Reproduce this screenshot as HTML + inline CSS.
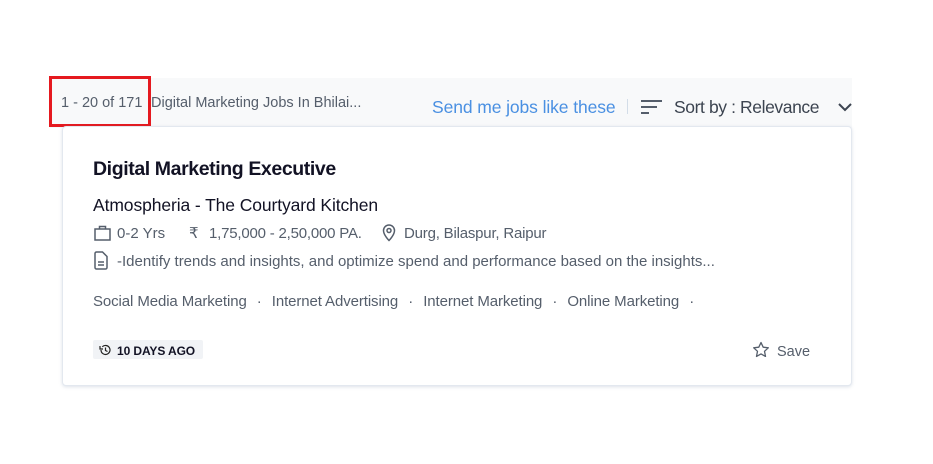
<!DOCTYPE html>
<html><head><style>
*{margin:0;padding:0;box-sizing:border-box}
body{width:933px;height:464px;background:#fff;font-family:"Liberation Sans",sans-serif;position:relative;overflow:hidden}
.bg{position:absolute;left:50px;top:78px;width:802px;height:50px;background:#f8f9fa}
.red{position:absolute;left:49px;top:76px;width:102px;height:51px;border:3px solid #e5191f}
.t{position:absolute;white-space:nowrap}
.card{position:absolute;left:62px;top:126px;width:790px;height:260px;background:#fff;border:1px solid #e3e8ef;border-radius:4px;box-shadow:0 1px 3px rgba(120,140,170,.25)}
</style></head><body>
<div class="bg"></div>
<div class="t" style="left:61px;top:95px;font-size:14.5px;color:#555e6b;letter-spacing:0px">1 - 20 of 171</div>
<div class="t" style="left:151px;top:95px;font-size:14.5px;color:#555e6b;letter-spacing:0px">Digital Marketing Jobs In Bhilai...</div>
<div class="red"></div>
<div class="t" style="left:432px;top:97px;font-size:17.5px;color:#4a90e2;letter-spacing:-0.1px">Send me jobs like these</div>
<div style="position:absolute;left:627px;top:99px;width:1px;height:15px;background:#d3dde8"></div>
<svg style="position:absolute;left:641px;top:99px" width="22" height="16"><g stroke="#555e6b" stroke-width="2"><line x1="0" y1="2" x2="21" y2="2"/><line x1="0" y1="8" x2="16" y2="8"/><line x1="0" y1="14" x2="8" y2="14"/></g></svg>
<div class="t" style="left:674px;top:97px;font-size:17.5px;color:#3c4450;letter-spacing:-0.4px">Sort by : Relevance</div>
<svg style="position:absolute;left:838px;top:102px" width="14" height="10"><path d="M1 2l6 6 6-6" fill="none" stroke="#3c4450" stroke-width="2"/></svg>
<div class="card"></div>
<div class="t" style="left:93px;top:158px;font-size:19.5px;font-weight:bold;color:#121224;letter-spacing:-0.4px">Digital Marketing Executive</div>
<div class="t" style="left:93px;top:195px;font-size:17.5px;color:#121224;letter-spacing:-0.1px">Atmospheria - The Courtyard Kitchen</div>
<svg style="position:absolute;left:94px;top:225px" width="17" height="16"><rect x="1" y="4" width="15" height="11" fill="none" stroke="#555e6b" stroke-width="1.5"/><path d="M5.5 4V1.5h6V4" fill="none" stroke="#555e6b" stroke-width="1.5"/></svg>
<div class="t" style="left:117px;top:225px;font-size:15px;color:#555e6b">0-2 Yrs</div>
<div class="t" style="left:189px;top:224px;font-size:15px;color:#555e6b">₹</div>
<div class="t" style="left:209px;top:225px;font-size:15px;color:#555e6b;letter-spacing:-0.2px">1,75,000 - 2,50,000 PA.</div>
<svg style="position:absolute;left:382px;top:224px" width="14" height="18"><path d="M7 1a5.5 5.5 0 0 0-5.5 5.5C1.5 11 7 16.5 7 16.5s5.5-5.5 5.5-10A5.5 5.5 0 0 0 7 1z" fill="none" stroke="#555e6b" stroke-width="1.5"/><circle cx="7" cy="6.5" r="2" fill="none" stroke="#555e6b" stroke-width="1.5"/></svg>
<div class="t" style="left:404px;top:225px;font-size:15px;color:#555e6b;letter-spacing:-0.2px">Durg, Bilaspur, Raipur</div>
<svg style="position:absolute;left:94px;top:251px" width="14" height="19"><path d="M1 2.5a1.5 1.5 0 0 1 1.5-1.5h6l4.5 4.5v11a1.5 1.5 0 0 1-1.5 1.5h-9A1.5 1.5 0 0 1 1 16.5z" fill="none" stroke="#555e6b" stroke-width="1.5"/><path d="M4 11h6M4 14h6" stroke="#555e6b" stroke-width="1.5"/></svg>
<div class="t" style="left:117px;top:253px;font-size:15px;color:#555e6b;letter-spacing:0px">-Identify trends and insights, and optimize spend and performance based on the insights...</div>
<div class="t" style="left:93px;top:293px;font-size:15px;color:#555e6b;letter-spacing:-0.1px">Social Media Marketing <span style="margin:0 6px">·</span> Internet Advertising <span style="margin:0 6px">·</span> Internet Marketing <span style="margin:0 6px">·</span> Online Marketing <span style="margin:0 6px">·</span></div>
<div style="position:absolute;left:93px;top:340px;width:110px;height:19px;background:#f1f3f6;border-radius:2px"></div>
<svg style="position:absolute;left:99px;top:344px" width="12" height="12"><path d="M2 6a4.5 4.5 0 1 0 1.3-3.2" fill="none" stroke="#222" stroke-width="1.2"/><path d="M1 2v3h3" fill="none" stroke="#222" stroke-width="1.2"/><path d="M6.5 3.5V6.5l2 1" fill="none" stroke="#222" stroke-width="1.2"/></svg>
<div class="t" style="left:117px;top:344px;font-size:12px;font-weight:bold;color:#121224;letter-spacing:-0.1px">10 DAYS AGO</div>
<svg style="position:absolute;left:752px;top:341px" width="18" height="17"><path d="M9 1.5l2.2 4.7 5.1.6-3.8 3.5 1 5.1L9 12.9l-4.5 2.5 1-5.1L1.7 6.8l5.1-.6z" fill="none" stroke="#555e6b" stroke-width="1.3" stroke-linejoin="round"/></svg>
<div class="t" style="left:777px;top:344px;font-size:14.5px;color:#555e6b">Save</div>
</body></html>
